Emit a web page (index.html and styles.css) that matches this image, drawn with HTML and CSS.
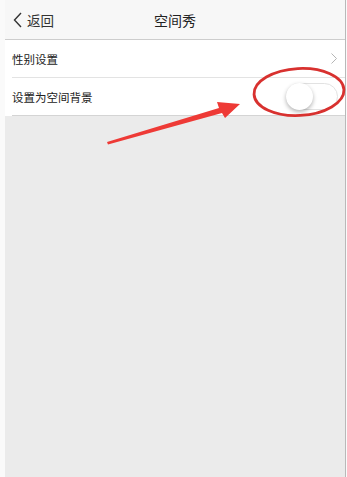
FILE: index.html
```html
<!DOCTYPE html>
<html lang="zh-CN">
<head>
  <meta charset="UTF-8" />
  <meta name="viewport" content="width=device-width, initial-scale=1.0"/>
  <title>空间秀</title>
  <link rel="stylesheet" href="styles.css">
</head>
<body>

  <div class="screen">
    <div class="nav-bar">
      <div class="nav-back">
        <svg class="back-icon" width="9" height="16" viewBox="0 0 9 16">
          <path d="M8 1 L1.5 8 L8 15" fill="none" stroke="#333" stroke-width="1.4"/>
        </svg>
        <span>返回</span>
      </div>
      <div class="nav-title">空间秀</div>
    </div>

    <div class="settings-list">
      <div class="settings-row">
        <span class="row-label">性别设置</span>
        <svg class="chevron" width="6" height="11" viewBox="0 0 6 11">
          <path d="M0.5 0.5 L5.5 5.5 L0.5 10.5" fill="none" stroke="#b5b5b5" stroke-width="1"/>
        </svg>
      </div>
      <div class="settings-row">
        <span class="row-label">设置为空间背景</span>
        <div class="switch">
          <div class="switch-knob"></div>
        </div>
      </div>
    </div>

    <div class="empty-area"></div>
  </div>

  <!-- red annotation drawn over the screenshot -->
  <svg class="annotation" width="347" height="477" viewBox="0 0 347 477">
    <ellipse cx="299" cy="92" rx="45" ry="23.5" transform="rotate(-3 299 92)"
             fill="none" stroke="#d8312f" stroke-width="2.8"/>
    <polygon points="107,142 219,108 217,102 240,104 225,118 222,113 108,144.5"
             fill="#ee3a36"/>
  </svg>

</body>
</html>
```

FILE: styles.css
```css
body {
  margin: 0;
  width: 347px;
  height: 477px;
  overflow: hidden;
  background-color: #fafafa;
  font-family: "Noto Sans CJK SC", "Noto Sans", sans-serif;
  color: #222;
  position: relative;
}

.screen {
  margin-left: 5px;
  width: 340px;
  height: 477px;
  border-right: 1px solid #b9b9b9;
  display: flex;
  flex-direction: column;
}

.nav-bar {
  height: 39px;
  background-color: #f7f7f7;
  border-bottom: 1px solid #cdcdcd;
  display: flex;
  align-items: center;
  position: relative;
}

.nav-back {
  display: flex;
  align-items: center;
  gap: 5px;
  padding-left: 8px;
  font-size: 13.5px;
  color: #333;
}

.nav-title {
  position: absolute;
  left: 0;
  right: 0;
  text-align: center;
  font-size: 14px;
  color: #222;
  pointer-events: none;
}

.settings-list {
  background-color: #fff;
}

.settings-row {
  height: 37px;
  margin-left: 7px;
  padding-right: 8px;
  display: flex;
  align-items: center;
  justify-content: space-between;
  font-size: 11.5px;
  color: #222;
}

.settings-row + .settings-row {
  border-top: 1px solid #e3e3e3;
}

.settings-row:last-child {
  border-bottom: 1px solid #d4d4d4;
}

.switch {
  width: 52px;
  height: 27px;
  border-radius: 14px;
  background-color: #fff;
  border: 1px solid #e2e2e2;
  box-sizing: border-box;
  position: relative;
  margin-right: -1px;
}

.switch-knob {
  position: absolute;
  left: -1px;
  top: -1px;
  width: 27px;
  height: 27px;
  border-radius: 50%;
  background-color: #fff;
  box-shadow: 0 2px 4px rgba(0, 0, 0, 0.3);
}

.empty-area {
  flex: 1;
  background-color: #ebebeb;
}

.annotation {
  position: absolute;
  left: 0;
  top: 0;
}
```
